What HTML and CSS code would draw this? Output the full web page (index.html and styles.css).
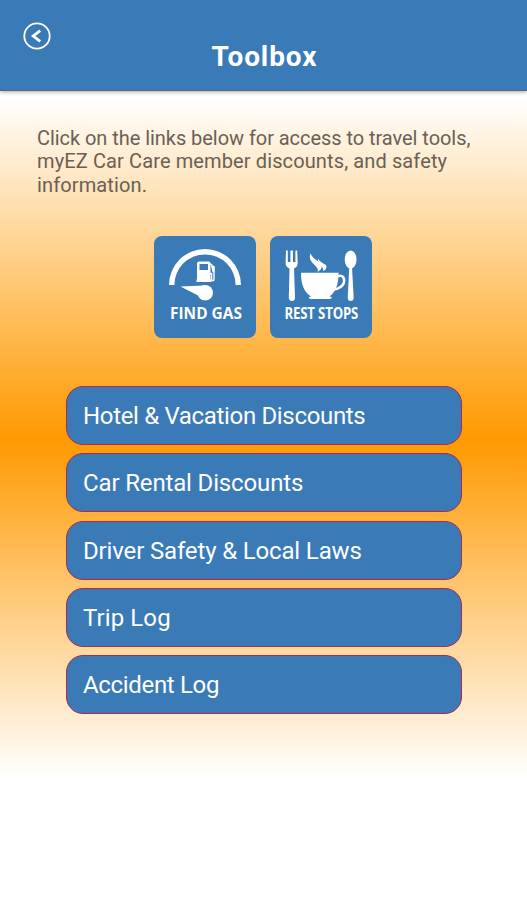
FILE: index.html
```html
<!DOCTYPE html>
<html lang="en">
<head>
    <meta charset="UTF-8">
    <meta name="viewport" content="width=device-width, initial-scale=1.0">
    <title>Toolbox</title>
    <link rel="stylesheet" href="styles.css">
</head>
<body>

<header class="header">
    <a href="#" class="back-btn" aria-label="Back">
        <svg width="28" height="28" viewBox="0 0 28 28">
            <circle cx="14" cy="14" r="12.7" fill="none" stroke="#fff" stroke-width="1.8"/>
            <path d="M17.2 8.6 L10.2 14 L17.2 19.4" fill="none" stroke="#fff" stroke-width="2.8"/>
        </svg>
    </a>
    <h1>Toolbox</h1>
</header>

<main class="content">
    <p class="intro">
        <span class="line-tight">Click on the links below for access to travel tools,</span>
        myEZ Car Care member discounts, and safety information.
    </p>

    <div class="tiles">
        <a href="#" class="tile">
            <!-- gauge with fuel pump -->
            <svg width="102" height="102" viewBox="0 0 102 102" fill="#fff">
                <path d="M15 49 A36 36 0 0 1 87 49 H81.6 A30.6 30.6 0 0 0 20.4 49 Z"/>
                <path fill-rule="evenodd" d="M43 27.5 Q43 25.5 45 25.5 H54.5 Q56.5 25.5 56.5 27.5 V43.5 H57.5 V46 H42.5 V43.5 H43 Z M45.5 28 V34 H54 V28 Z"/>
                <path d="M56 27.5 L60 31 V43 Q60 45 58.8 44.8 Q57.6 44.6 57.6 43 V37.5 H56" fill="none" stroke="#fff" stroke-width="1.4"/>
                <path d="M57 30 H60.5 V36 H58.5 Z"/>
                <path d="M26.5 50.5 L50 49.5 L46 60.5 Z"/>
                <circle cx="51.2" cy="56.7" r="7.8"/>
                <text class="tile-label" x="16" y="83" textLength="72" lengthAdjust="spacingAndGlyphs">FIND GAS</text>
            </svg>
        </a>
        <a href="#" class="tile">
            <!-- fork, cup and spoon -->
            <svg width="102" height="102" viewBox="0 0 102 102" fill="#fff">
                <path d="M16 14.5 H17.8 V26 H20.4 V14.5 H23 V26 H25.4 V14.5 H27.2 L27.7 27 Q27.7 31 24 32.5 L25 62 Q24.8 65 22 65 Q19 65 18.8 62 L19.5 32.5 Q15.6 31 15.6 27 Z"/>
                <ellipse cx="80.6" cy="23.6" rx="5.9" ry="9.2"/>
                <path d="M79.3 31 H82 L83.7 62 Q83.5 65 80.8 65 Q77.9 65 77.7 62 Z"/>
                <path d="M31 36.8 H68.5 C68.5 49 65.5 56 59.5 60.5 C63 61 62 63 59 63 H42 C38 63 38 61 41 60.5 C34.5 56 31 50 31 36.8 Z"/>
                <path d="M67 40.5 C75.5 37 76 47 70.5 51 Q67 53.6 63 53.6" fill="none" stroke="#fff" stroke-width="2.6"/>
                <path d="M40.8 17 C41 23.5 53.5 25.5 51.5 32 Q50.8 34.5 47.5 36 C50.5 29.5 36 27 40.8 17 Z"/>
                <path d="M48.2 22.5 C50 27.5 57.5 27.5 56.5 31.5 Q56 34 53 35 C55 31 46.5 28.5 48.2 22.5 Z"/>
                <text class="tile-label narrow" transform="translate(14.5 83) scale(0.825 1)">REST STOPS</text>
            </svg>
        </a>
    </div>

    <nav class="links">
        <a href="#" class="link-btn long">Hotel &amp; Vacation Discounts</a>
        <a href="#" class="link-btn">Car Rental Discounts</a>
        <a href="#" class="link-btn">Driver Safety &amp; Local Laws</a>
        <a href="#" class="link-btn short">Trip Log</a>
        <a href="#" class="link-btn long">Accident Log</a>
    </nav>
</main>

</body>
</html>
```
FILE: styles.css
```css
* {
    box-sizing: border-box;
}

body {
    font-family: Roboto, "Liberation Sans", sans-serif;
    margin: 0;
    min-height: 900px;
    background: linear-gradient(to bottom, #fff 98px, #ff9900 438px, #fff 778px);
}

a {
    color: white;
    text-decoration: none;
}

.header {
    position: relative;
    height: 91px;
    padding-top: 40px;
    background-color: #3a7ab7;
    border-bottom: 1px solid #566a70;
    box-shadow: 0 1px 4px rgba(0, 0, 0, 0.35);
}

.header h1 {
    margin: 0;
    padding-left: 2px;
    color: white;
    font-size: 28px;
    line-height: 34px;
    font-weight: bold;
    text-align: center;
    letter-spacing: 0.9px;
}

.back-btn {
    position: absolute;
    top: 22px;
    left: 23px;
}

.back-btn svg {
    display: block;
}

.content {
    padding: 36px 37px 0;
}

.intro {
    margin: 0;
    color: #6a6055;
    font-size: 20px;
    line-height: 23.4px;
    letter-spacing: 0.12px;
}

.line-tight {
    letter-spacing: -0.05px;
}

.tiles {
    display: flex;
    justify-content: center;
    gap: 14px;
    margin: 39px 2px 0 0;
}

.tile {
    width: 102px;
    height: 102px;
    border-radius: 8px;
    background-color: #3a7ab7;
}

.tile svg {
    display: block;
}

.tile-label {
    font-family: "Open Sans", "Noto Sans", sans-serif;
    font-size: 16.5px;
    font-weight: bold;
}

.tile-label.narrow {
    font-size: 16px;
    letter-spacing: -0.2px;
}

.links {
    display: flex;
    flex-direction: column;
    gap: 8.4px;
    margin: 47.6px 28px 0 29px;
}

.link-btn {
    height: 59px;
    padding-left: 16px;
    border: 1px solid #b02a48;
    border-radius: 17px;
    background-color: #3a7ab7;
    font-size: 24px;
    line-height: 58.2px;
    letter-spacing: -0.15px;
}

.link-btn.long {
    letter-spacing: -0.33px;
}

.link-btn.short {
    letter-spacing: 0.1px;
}
```
